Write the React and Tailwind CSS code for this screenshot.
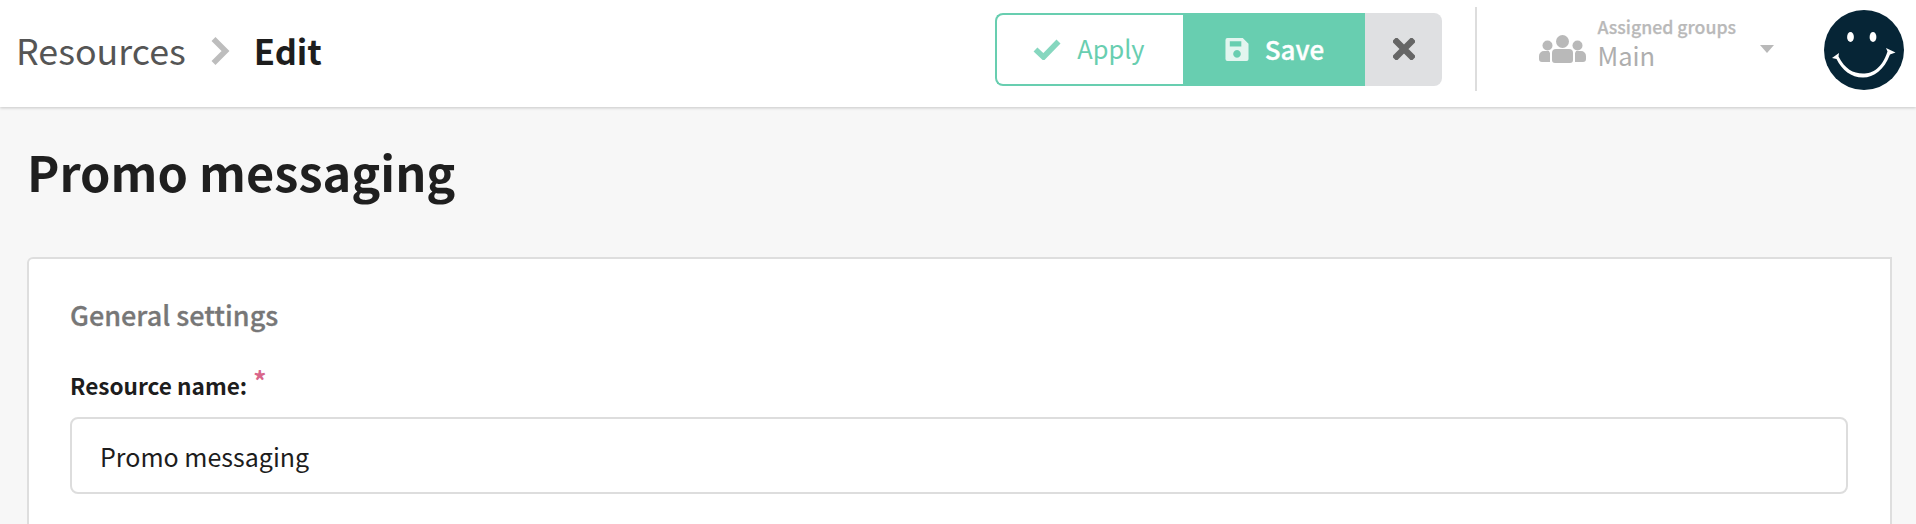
import React from "react";

function Check() {
  return (
    <svg width="28" height="22" viewBox="0 0 28 22" className="opacity-80">
      <path d="M2.5 11.5 L10.5 19 L25.5 3.5" fill="none" stroke="#68ceb0" strokeWidth="5.6" strokeLinejoin="miter" />
    </svg>
  );
}

function Floppy() {
  return (
    <svg width="24" height="25" viewBox="0 0 25 25">
      <path
        fillRule="evenodd"
        fill="#e2f5ef"
        d="M2.5 0.5 H18.5 L24.5 6.5 V22.5 a2 2 0 0 1 -2 2 H2.5 a2 2 0 0 1 -2 -2 V2.5 a2 2 0 0 1 2 -2 Z M5 4 V9.5 H17 V4 Z M12.5 13 a4 4 0 1 0 0.01 0 Z"
      />
    </svg>
  );
}

function Cross() {
  return (
    <svg width="22" height="22" viewBox="0 0 22 22">
      <path d="M3.5 3.5 L18.5 18.5 M18.5 3.5 L3.5 18.5" stroke="#666666" strokeWidth="6.4" strokeLinecap="square" fill="none" />
    </svg>
  );
}

function Group() {
  return (
    <svg width="47" height="28" viewBox="0 0 47 28" fill="#b9b9b9">
      <circle cx="8.5" cy="10.5" r="5" />
      <circle cx="38.5" cy="10.5" r="5" />
      <circle cx="23.5" cy="6.5" r="6.5" />
      <path d="M0 21 a5 5 0 0 1 5 -5 H10 a6 6 0 0 0 1 2 v9 H3 a3 3 0 0 1 -3 -3 Z" />
      <path d="M47 21 a5 5 0 0 0 -5 -5 H37 a6 6 0 0 1 -1 2 v9 H44 a3 3 0 0 0 3 -3 Z" />
      <path d="M13 18 a4 4 0 0 1 4 -4 H30 a4 4 0 0 1 4 4 V25 a3 3 0 0 1 -3 3 H16 a3 3 0 0 1 -3 -3 Z" />
    </svg>
  );
}

function Smiley() {
  return (
    <svg width="80" height="80" viewBox="0 0 80 80" className="shrink-0">
      <circle cx="40" cy="40" r="40" fill="#062536" />
      <ellipse cx="26.5" cy="27" rx="3.4" ry="5" fill="#fff" />
      <ellipse cx="49" cy="27" rx="3.4" ry="5" fill="#fff" />
      <path
        d="M8 48 L15 43 L14.5 46.5 C21 59 29 63.5 39 63.5 C49 63.5 58 58 63.5 41.5 L62 38 L71.5 42.5 L66 44.5 C60 60 50 67.5 39 67.5 C27 67.5 18 60 12.5 49 Z"
        fill="#fff"
      />
    </svg>
  );
}

export default function App() {
  return (
    <div className="h-[524px] overflow-hidden bg-[#f7f7f7] font-['Noto_Sans_CJK_SC',sans-serif]">
      <header className="relative h-[107px] bg-white shadow-[0_1px_3px_rgba(0,0,0,0.2)] flex items-center pl-[16px] pr-[12px]">
        <nav className="flex items-center -mt-[7px]">
          <span className="text-[35.8px] leading-[44px] -mt-[2px] text-[#555555] font-normal">Resources</span>
          <svg width="20" height="30" viewBox="0 0 20 30" className="ml-[24px] mr-[24px] mt-[1px]">
            <path d="M3.5 3 L15.5 15 L3.5 27" fill="none" stroke="#bdbdbd" strokeWidth="5.6" />
          </svg>
          <span className="text-[34.5px] leading-[44px] font-semibold text-[#1d1d1d]">Edit</span>
        </nav>
        <div className="ml-auto flex items-center">
          <div className="flex h-[73px] -mt-[9px]">
            <button className="w-[188px] pr-[3px] flex items-center justify-center gap-[16px] border-2 border-r-0 border-[#68ceb0] rounded-l-[8px] bg-white text-[#68ceb0] text-[25.4px] leading-none">
              <Check />
              <span>Apply</span>
            </button>
            <button className="w-[182px] flex items-center justify-center gap-[16px] bg-[#68ceb0] text-white text-[26px] leading-none font-medium [-webkit-text-stroke:0.35px_#ffffff]">
              <Floppy />
              <span>Save</span>
            </button>
            <button className="w-[77px] flex items-center justify-center bg-[#dfe0e2] rounded-r-[8px]">
              <Cross />
            </button>
          </div>
          <div className="w-[2px] h-[84px] bg-[#dddddd] ml-[33px] -mt-[9px]" />
          <div className="flex items-center ml-[62px] -mt-[10px]">
            <Group />
            <div className="ml-[11px] flex flex-col -mt-[14px]">
              <span className="text-[17.7px] leading-[26px] font-medium text-[#b9b9b9] [-webkit-text-stroke:0.25px_#b9b9b9]">Assigned groups</span>
              <span className="text-[25.5px] leading-[32px] font-normal text-[#aeaeae]">Main</span>
            </div>
            <span className="ml-[24px] w-0 h-0 border-x-[7.5px] border-x-transparent border-t-[8px] border-t-[#b9b9b9]" />
          </div>
          <div className="ml-[50px] -mt-[8px]">
            <Smiley />
          </div>
        </div>
      </header>

      <main className="pl-[27px] pr-[24px]">
        <h1 className="text-[48.7px] leading-[60px] font-semibold text-[#1f1f1f] mt-[34px]">Promo messaging</h1>
        <section className="mt-[56px] h-[300px] bg-white border-2 border-[#dedede] rounded-tl-[6px] pl-[41px] pr-[42px] pt-[38px]">
          <h2 className="text-[27px] leading-[36px] font-medium text-[#777777] [-webkit-text-stroke:0.3px_#777777]">General settings</h2>
          <div className="mt-[38px] flex items-start">
            <label className="text-[22.6px] leading-[30px] font-semibold text-[#1d1d1d]">Resource name:</label>
            <span className="ml-[6px] -mt-[6px] text-[26px] leading-[30px] font-semibold text-[#d9668a]">*</span>
          </div>
          <input
            readOnly
            value="Promo messaging"
            className="mt-[16px] block w-full h-[77px] border-2 border-[#dddddd] rounded-[8px] bg-white px-[28px] text-[25px] text-[#1d1d1d] outline-none font-['Noto_Sans_CJK_SC',sans-serif]"
          />
        </section>
      </main>
    </div>
  );
}
